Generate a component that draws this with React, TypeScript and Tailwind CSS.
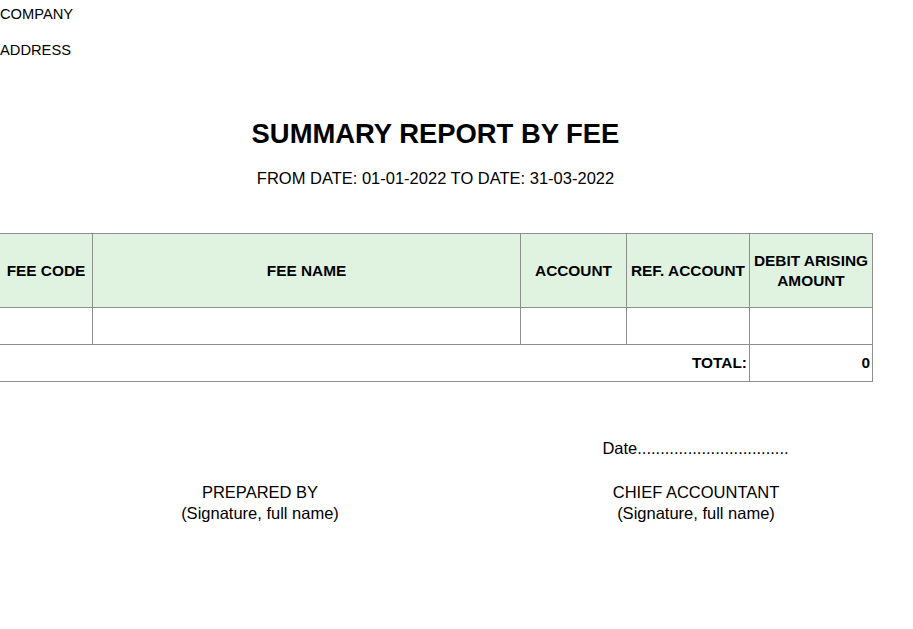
export default function App() {
  const font = { fontFamily: '"Liberation Sans", Arial, sans-serif' }
  const th = 'border border-[#8e8e8e] bg-[#e0f2e0] text-[15.4px] font-bold leading-[20px] text-black text-center align-middle'
  const td = 'border border-[#8e8e8e] h-[37px]'

  return (
    <div className="w-[913px] h-[629px] bg-white text-black" style={font}>
      <div className="w-[873px] -ml-px">
        {/* Company header */}
        <div className="h-[28px] flex items-center pl-[1px] text-[14.7px]">COMPANY</div>
        <div className="h-[8px]" />
        <div className="h-[28px] flex items-center pl-[1px] text-[14.7px]">ADDRESS</div>

        {/* Title */}
        <div className="h-[54px]" />
        <div className="h-[32px] flex items-center justify-center text-[27.4px] font-bold">
          SUMMARY REPORT BY FEE
        </div>
        <div className="h-[16px]" />
        <div className="h-[24px] flex items-center justify-center text-[16.5px]">
          FROM DATE: 01-01-2022 TO DATE: 31-03-2022
        </div>
        <div className="h-[43px]" />

        {/* Table */}
        <table className="border-collapse w-[873px] table-fixed">
          <colgroup>
            <col className="w-[93px]" />
            <col className="w-[428px]" />
            <col className="w-[106px]" />
            <col className="w-[123px]" />
            <col className="w-[123px]" />
          </colgroup>
          <thead>
            <tr className="h-[74px]">
              <th className={th}>FEE CODE</th>
              <th className={th}>FEE NAME</th>
              <th className={th}>ACCOUNT</th>
              <th className={th}>REF. ACCOUNT</th>
              <th className={th}>
                DEBIT ARISING
                <br />
                AMOUNT
              </th>
            </tr>
          </thead>
          <tbody>
            <tr>
              <td className={td} />
              <td className={td} />
              <td className={td} />
              <td className={td} />
              <td className={td} />
            </tr>
            <tr>
              <td colSpan={4} className={`${td} text-right pr-[2px] text-[15.4px] font-bold`}>
                TOTAL:
              </td>
              <td className={`${td} text-right pr-[2px] text-[15.4px] font-bold`}>0</td>
            </tr>
          </tbody>
        </table>

        {/* Signatures */}
        <div className="h-[56px]" />
        <div className="flex">
          <div className="w-[520px]" />
          <div className="w-[353px] flex justify-center text-[16.5px] leading-[20px]">
            Date.................................
          </div>
        </div>
        <div className="h-[24px]" />
        <div className="flex text-[16.5px] leading-[21px]">
          <div className="w-[522px] flex justify-center">
            <div className="flex flex-col items-center">
              <span>PREPARED BY</span>
              <span>(Signature, full name)</span>
            </div>
          </div>
          <div className="w-[350px] flex justify-center">
            <div className="flex flex-col items-center">
              <span>CHIEF ACCOUNTANT</span>
              <span>(Signature, full name)</span>
            </div>
          </div>
        </div>
      </div>
    </div>
  )
}
